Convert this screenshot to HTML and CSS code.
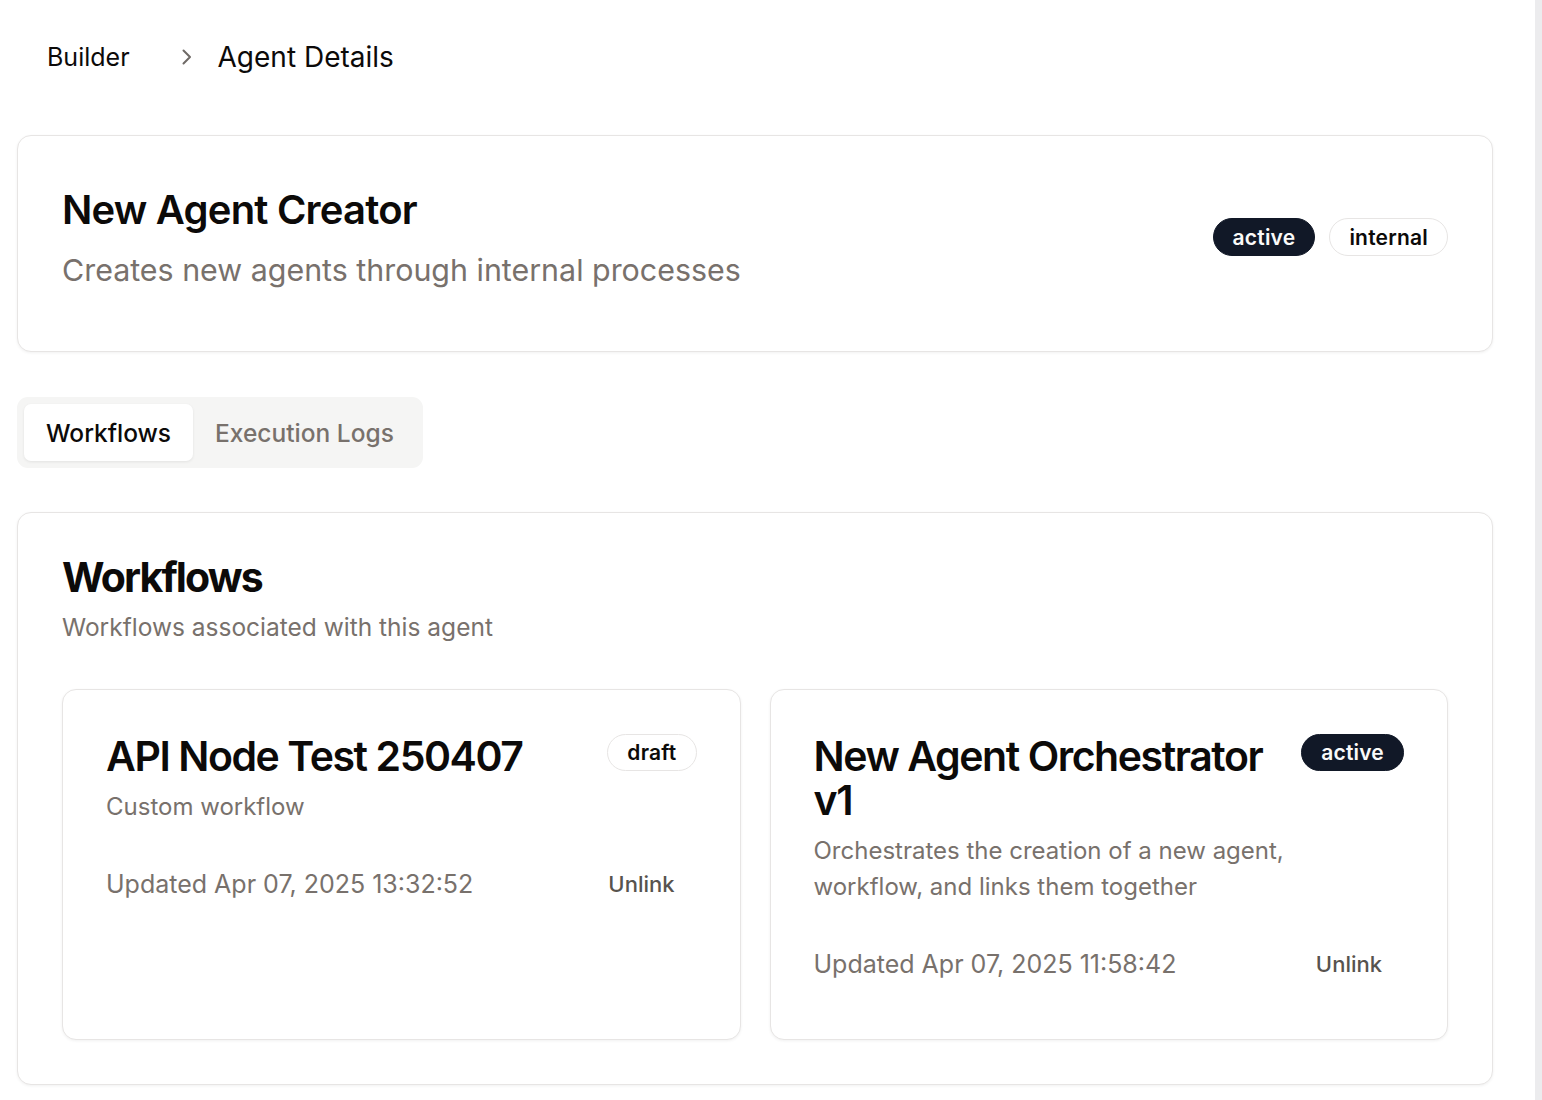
FILE: index.html
```html
<!DOCTYPE html>
<html lang="en">
<head>
<meta charset="utf-8">
<title>Agent Details</title>
<link rel="stylesheet" href="styles.css">
</head>
<body>
<div class="shell">
  <main class="page">
    <nav class="crumbs">
      <a class="crumb-link">Builder</a>
      <svg class="chev" width="14" height="18" viewBox="0 0 14 18" fill="none"><path d="M3.5 2.5 L10 9 L3.5 15.5" stroke="#6f6a66" stroke-width="2" stroke-linecap="round" stroke-linejoin="round"/></svg>
      <span class="crumb-current">Agent Details</span>
    </nav>

    <section class="card agent-card">
      <div class="agent-text">
        <h1 class="agent-title">New Agent Creator</h1>
        <p class="agent-desc">Creates new agents through internal processes</p>
      </div>
      <div class="badges">
        <span class="badge badge-dark">active</span>
        <span class="badge badge-outline">internal</span>
      </div>
    </section>

    <div class="tabs">
      <button class="tab tab-active">Workflows</button>
      <button class="tab">Execution Logs</button>
    </div>

    <section class="card section-card">
      <header class="section-head">
        <h2 class="section-title">Workflows</h2>
        <p class="section-desc">Workflows associated with this agent</p>
      </header>
      <div class="wf-grid">
        <article class="card wf-card">
          <div class="wf-head">
            <div class="wf-text">
              <h3 class="wf-title">API Node Test 250407</h3>
              <p class="wf-desc">Custom workflow</p>
            </div>
            <span class="badge badge-outline badge-sm">draft</span>
          </div>
          <div class="wf-foot">
            <span class="wf-updated">Updated Apr 07, 2025 13:32:52</span>
            <button class="unlink">Unlink</button>
          </div>
        </article>
        <article class="card wf-card">
          <div class="wf-head">
            <div class="wf-text">
              <h3 class="wf-title">New Agent Orchestrator v1</h3>
              <p class="wf-desc">Orchestrates the creation of a new agent, workflow, and links them together</p>
            </div>
            <span class="badge badge-dark badge-sm">active</span>
          </div>
          <div class="wf-foot">
            <span class="wf-updated">Updated Apr 07, 2025 11:58:42</span>
            <button class="unlink">Unlink</button>
          </div>
        </article>
      </div>
    </section>
  </main>
  <div class="rail"></div>
</div>
</body>
</html>
```
FILE: styles.css
```css
* { box-sizing: border-box; }
html, body { margin: 0; padding: 0; background: #fff; }
body {
  font-family: Inter, "Noto Sans", "Liberation Sans", sans-serif;
  color: #0c0a09;
  height: 1100px;
  overflow: hidden;
}
.shell { display: flex; min-height: 1100px; }
.page { flex: 1; padding: 0 42px 0 17px; }
.rail { width: 7px; background: #ececee; flex-shrink: 0; }

.crumbs {
  display: flex;
  align-items: center;
  height: 114px;
  padding-left: 30px;
}
.crumb-link { font-size: 25px; color: #0c0a09; }
.chev { margin-left: 50px; margin-right: 24px; }
.crumb-current { font-size: 28px; color: #0c0a09; }

.card {
  background: #fff;
  border: 1px solid #e7e5e4;
  border-radius: 14px;
  box-shadow: 0 1px 3px rgba(0,0,0,0.06);
}
.agent-card {
  margin-top: 21px;
  height: 217px;
  padding: 54px 44px 0;
  display: flex;
  align-items: flex-start;
  justify-content: space-between;
}
.agent-title {
  margin: 0;
  font-size: 40px;
  font-weight: 600;
  line-height: 1;
  letter-spacing: -0.02em;
}
.agent-desc {
  margin: 18px 0 0;
  font-size: 30.4px;
  line-height: 45px;
  color: #78716c;
}
.badges { display: flex; gap: 14px; margin-top: 28px; }
.badge {
  display: inline-flex;
  align-items: center;
  justify-content: center;
  height: 38px;
  padding: 0 19px;
  border-radius: 999px;
  font-size: 21px;
  font-weight: 600;
  letter-spacing: 0.01em;
  white-space: nowrap;
  flex-shrink: 0;
}
.badge-dark { background: #111827; color: #fafaf9; border: 1px solid #111827; }
.badge-outline { background: #fff; color: #0c0a09; border: 1px solid #e7e5e4; }
.badge-sm { height: 37px; }

.tabs {
  margin-top: 45px;
  display: inline-flex;
  background: #f5f5f4;
  border-radius: 11px;
  padding: 7px;
}
.tab {
  font-family: inherit;
  font-size: 24.5px;
  border: 0;
  background: transparent;
  color: #78716c;
  height: 57px;
  padding: 0 22px;
  border-radius: 7px;
  font-weight: 500;
  cursor: pointer;
}
.tab-active {
  background: #fff;
  color: #0c0a09;
  box-shadow: 0 1px 3px rgba(0,0,0,0.08);
}

.section-card {
  margin-top: 44px;
  padding: 44px;
}
.section-head { margin-bottom: 43px; }
.section-title {
  margin: 0;
  font-size: 41px;
  font-weight: 700;
  line-height: 1;
  letter-spacing: -0.045em;
}
.section-desc {
  margin: 11px 0 0;
  font-size: 24.5px;
  line-height: 36.6px;
  color: #78716c;
}
.wf-grid {
  display: grid;
  grid-template-columns: 1fr 1fr;
  gap: 29px;
}
.wf-card {
  padding: 44px 43px;
  display: flex;
  flex-direction: column;
}
.wf-head {
  display: flex;
  justify-content: space-between;
  align-items: flex-start;
  gap: 4px;
}
.wf-title {
  margin: 0;
  font-size: 41px;
  font-weight: 600;
  line-height: 44px;
  letter-spacing: -0.035em;
}
.wf-desc {
  margin: 11px 0 0;
  font-size: 24px;
  line-height: 36px;
  color: #78716c;
}
.wf-foot {
  margin-top: 28px;
  height: 62px;
  display: flex;
  align-items: center;
  justify-content: space-between;
}
.wf-updated { font-size: 25px; color: #78716c; }
.unlink {
  font-family: inherit;
  border: 0;
  background: transparent;
  font-size: 22px;
  font-weight: 500;
  color: #57534e;
  padding: 0 22px;
  height: 62px;
  cursor: pointer;
}
```
